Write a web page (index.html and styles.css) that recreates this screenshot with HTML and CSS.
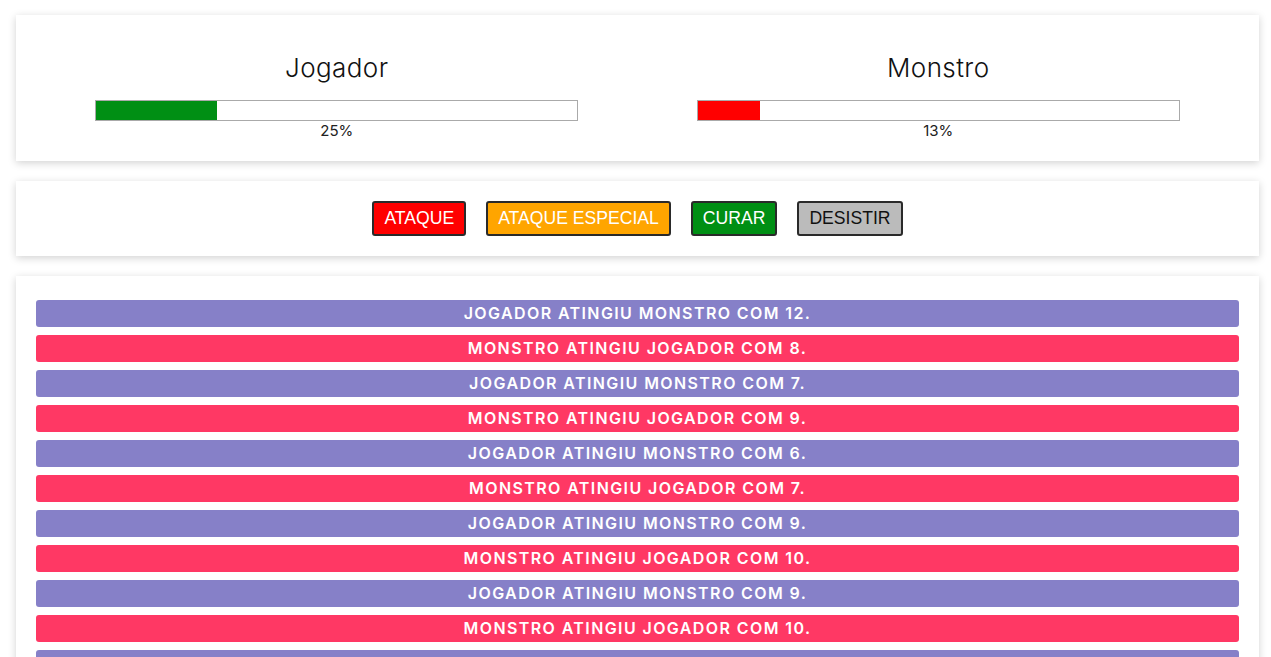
FILE: index.html
```html
<!DOCTYPE html>
<html lang="pt">
<head>
<meta charset="utf-8">
<title>Jogo</title>
<link rel="stylesheet" href="styles.css">
</head>
<body>
<div class="app">
  <section class="card scores">
    <div class="score">
      <h1 class="name">Jogador</h1>
      <div class="bar"><div class="fill fill-player" style="width:25%"></div></div>
      <div class="pct">25%</div>
    </div>
    <div class="score">
      <h1 class="name">Monstro</h1>
      <div class="bar"><div class="fill fill-monster" style="width:13%"></div></div>
      <div class="pct">13%</div>
    </div>
  </section>
  <section class="card controls">
    <button class="btn btn-attack">ATAQUE</button>
    <button class="btn btn-special">ATAQUE ESPECIAL</button>
    <button class="btn btn-heal">CURAR</button>
    <button class="btn btn-quit">DESISTIR</button>
  </section>
  <section class="card log">
    <ul class="log-list">
      <li class="entry player">JOGADOR ATINGIU MONSTRO COM 12.</li>
      <li class="entry monster">MONSTRO ATINGIU JOGADOR COM 8.</li>
      <li class="entry player">JOGADOR ATINGIU MONSTRO COM 7.</li>
      <li class="entry monster">MONSTRO ATINGIU JOGADOR COM 9.</li>
      <li class="entry player">JOGADOR ATINGIU MONSTRO COM 6.</li>
      <li class="entry monster">MONSTRO ATINGIU JOGADOR COM 7.</li>
      <li class="entry player">JOGADOR ATINGIU MONSTRO COM 9.</li>
      <li class="entry monster">MONSTRO ATINGIU JOGADOR COM 10.</li>
      <li class="entry player">JOGADOR ATINGIU MONSTRO COM 9.</li>
      <li class="entry monster">MONSTRO ATINGIU JOGADOR COM 10.</li>
      <li class="entry player">JOGADOR ATINGIU MONSTRO COM 8.</li>
    </ul>
  </section>
</div>
</body>
</html>
```

FILE: styles.css
```css
html, body {
  margin: 0;
  padding: 0;
  background: #fff;
  font-family: Inter, "Noto Sans", sans-serif;
}

.app {
  padding: 15px 12px 0 16px;
  display: flex;
  flex-direction: column;
  gap: 20px;
}

.card {
  background: #fff;
  box-shadow: 0 2px 8px rgba(0, 0, 0, 0.18);
  box-sizing: border-box;
}

.scores {
  display: flex;
  padding: 34px 20px 20px;
  height: 146px;
}

.score {
  flex: 1;
  display: flex;
  flex-direction: column;
  align-items: center;
}

.name {
  margin: 0 0 13px;
  font-weight: 300;
  font-size: 26px;
  line-height: 38px;
  color: #111;
  letter-spacing: 0.4px;
}

.bar {
  width: 483px;
  height: 22px;
  border: 1px solid #aaa;
  box-sizing: border-box;
  background: #fff;
}

.fill {
  height: 100%;
}

.fill-player { background: #008f14; }
.fill-monster { background: #ff0000; }

.pct {
  font-size: 15px;
  line-height: 20px;
  color: #222;
  font-weight: 400;
}

.controls {
  display: flex;
  justify-content: center;
  gap: 20px;
  padding: 20px;
  height: 75px;
}

.btn {
  font-family: "Liberation Sans", Arial, sans-serif;
  font-size: 17.6px;
  line-height: 21px;
  padding: 5px 10px;
  border: 2px solid #2a2a2a;
  border-radius: 3px;
  color: #fff;
  cursor: pointer;
  height: 35px;
}

.btn-attack { background: #ff0000; }
.btn-special { background: #ffa500; }
.btn-heal { background: #008f14; }
.btn-quit { background: #bbbbbb; color: #111; }

.log {
  padding: 24px 20px 20px;
}

.log-list {
  list-style: none;
  margin: 0;
  padding: 0;
  display: flex;
  flex-direction: column;
  gap: 8px;
}

.entry {
  height: 27px;
  line-height: 27px;
  border-radius: 3px;
  text-align: center;
  color: #fff;
  font-weight: 600;
  font-size: 16px;
  letter-spacing: 1.4px;
}

.entry.player { background: #8680c8; }
.entry.monster { background: #ff3864; }
```
